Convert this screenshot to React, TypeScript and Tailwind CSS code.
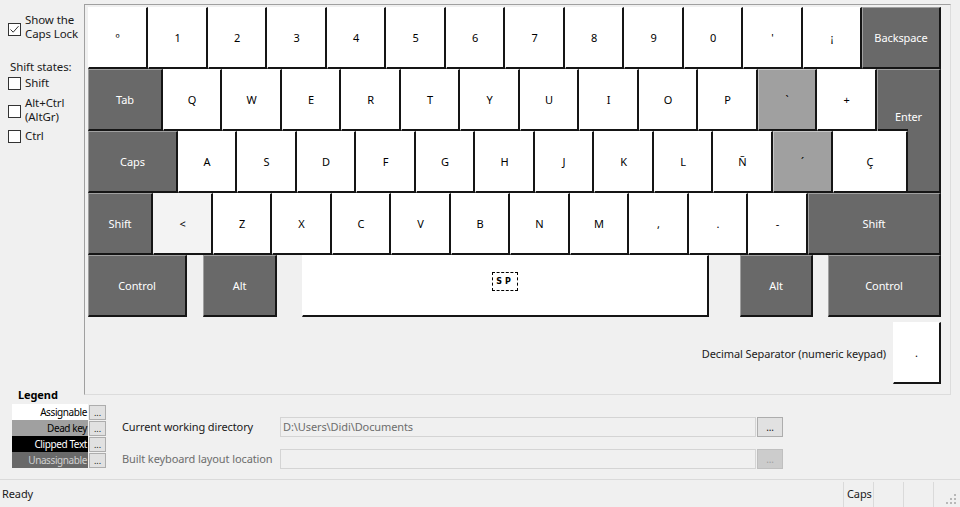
import React from 'react';

type Kind = 'w' | 'd' | 'g' | 'l';

interface KeyDef {
  t: string;
  w: string;
  k?: Kind;
  gap?: string;
}

const kindCls: Record<Kind, string> = {
  w: 'bg-white border-t-white border-l-white text-black',
  d: 'bg-[#696969] border-t-[#a0a0a0] border-l-[#a0a0a0] text-white',
  g: 'bg-[#a0a0a0] border-t-[#c6c6c6] border-l-[#c6c6c6] text-black',
  l: 'bg-[#f3f3f3] border-t-[#f3f3f3] border-l-[#f3f3f3] text-black',
};

const base =
  'h-[62px] shrink-0 flex items-center justify-center pt-[2px] border-t border-l border-r-2 border-b-2 border-r-[#151515] border-b-[#151515]';

const row1: KeyDef[] = [
  { t: 'º', w: 'w-[60px]' },
  { t: '1', w: 'w-[60px]' },
  { t: '2', w: 'w-[59px]' },
  { t: '3', w: 'w-[60px]' },
  { t: '4', w: 'w-[59px]' },
  { t: '5', w: 'w-[60px]' },
  { t: '6', w: 'w-[59px]' },
  { t: '7', w: 'w-[60px]' },
  { t: '8', w: 'w-[59px]' },
  { t: '9', w: 'w-[60px]' },
  { t: '0', w: 'w-[59px]' },
  { t: "'", w: 'w-[60px]' },
  { t: '¡', w: 'w-[59px]' },
  { t: 'Backspace', w: 'w-[79px]', k: 'd' },
];

const row2: KeyDef[] = [
  { t: 'Tab', w: 'w-[75px]', k: 'd' },
  { t: 'Q', w: 'w-[59px]' },
  { t: 'W', w: 'w-[60px]' },
  { t: 'E', w: 'w-[59px]' },
  { t: 'R', w: 'w-[60px]' },
  { t: 'T', w: 'w-[59px]' },
  { t: 'Y', w: 'w-[60px]' },
  { t: 'U', w: 'w-[59px]' },
  { t: 'I', w: 'w-[60px]' },
  { t: 'O', w: 'w-[59px]' },
  { t: 'P', w: 'w-[60px]' },
  { t: '`', w: 'w-[59px]', k: 'g' },
  { t: '+', w: 'w-[60px]' },
];

const row3: KeyDef[] = [
  { t: 'Caps', w: 'w-[90px]', k: 'd' },
  { t: 'A', w: 'w-[59px]' },
  { t: 'S', w: 'w-[60px]' },
  { t: 'D', w: 'w-[59px]' },
  { t: 'F', w: 'w-[60px]' },
  { t: 'G', w: 'w-[59px]' },
  { t: 'H', w: 'w-[60px]' },
  { t: 'J', w: 'w-[59px]' },
  { t: 'K', w: 'w-[60px]' },
  { t: 'L', w: 'w-[59px]' },
  { t: 'Ñ', w: 'w-[60px]' },
  { t: '´', w: 'w-[60px]', k: 'g' },
];

const row4: KeyDef[] = [
  { t: 'Shift', w: 'w-[65px]', k: 'd' },
  { t: '<', w: 'w-[60px]', k: 'l' },
  { t: 'Z', w: 'w-[59px]' },
  { t: 'X', w: 'w-[60px]' },
  { t: 'C', w: 'w-[59px]' },
  { t: 'V', w: 'w-[60px]' },
  { t: 'B', w: 'w-[59px]' },
  { t: 'N', w: 'w-[60px]' },
  { t: 'M', w: 'w-[59px]' },
  { t: ',', w: 'w-[60px]' },
  { t: '.', w: 'w-[59px]' },
  { t: '-', w: 'w-[60px]' },
  { t: 'Shift', w: 'w-[133px]', k: 'd' },
];

function Key({ t, w, k = 'w', gap = '' }: KeyDef) {
  return <div className={`${base} ${w} ${kindCls[k]} ${gap}`}>{t}</div>;
}

function Check({ on }: { on?: boolean }) {
  return (
    <span className="flex h-[13px] w-[13px] shrink-0 items-center justify-center border border-[#333] bg-white">
      {on && (
        <svg width="11" height="11" viewBox="0 0 11 11">
          <path d="M1.5 5.5 L4.2 8.2 L9.5 2.2" stroke="#333" strokeWidth="1" fill="none" />
        </svg>
      )}
    </span>
  );
}

const legend = [
  { t: 'Assignable', c: 'bg-white text-black' },
  { t: 'Dead key', c: 'bg-[#a0a0a0] text-black' },
  { t: 'Clipped Text', c: 'bg-black text-white' },
  { t: 'Unassignable', c: 'bg-[#696969] text-[#d0d0d0]' },
];

export default function App() {
  return (
    <div className="flex h-[507px] w-[960px] flex-col overflow-hidden bg-[#f0f0f0] font-['Noto_Sans',sans-serif] text-[11px] tracking-[-0.1px] text-[#1a1a1a]">
      <div className="flex h-[395px]">
        {/* options */}
        <div className="w-[84px] shrink-0 pl-[8px] pt-[13px] text-[11.5px] leading-[14px]">
          <div className="flex items-start gap-[4px]">
            <span className="mt-[10px]">
              <Check on />
            </span>
            <div>
              Show the
              <br />
              Caps Lock
            </div>
          </div>
          <div className="mt-[19px] pl-[2px]">Shift states:</div>
          <div className="mt-[2px] flex items-center gap-[4px]">
            <Check />
            <span>Shift</span>
          </div>
          <div className="mt-[6px] flex items-start gap-[4px]">
            <span className="mt-[9px]">
              <Check />
            </span>
            <div>
              Alt+Ctrl
              <br />
              (AltGr)
            </div>
          </div>
          <div className="mt-[5px] flex items-center gap-[4px]">
            <Check />
            <span>Ctrl</span>
          </div>
        </div>

        {/* keyboard */}
        <div className="mt-[4px] h-[391px] w-[867px] border border-t-[#a0a0a0] border-l-[#a0a0a0] border-r-[#dcdcdc] border-b-[#dcdcdc] pl-[3px] pt-[2px]">
          <div className="flex">
            {row1.map((k, i) => (
              <Key key={i} {...k} />
            ))}
          </div>
          <div className="flex">
            {row2.map((k, i) => (
              <Key key={i} {...k} />
            ))}
            <div className="flex h-[62px] w-[64px] shrink-0 flex-col border-t border-l border-r-2 border-t-[#a0a0a0] border-l-[#a0a0a0] border-r-[#151515] bg-[#696969] text-white">
              <div className="flex flex-1 items-end justify-center pb-[4px]">Enter</div>
              <div className="h-[2px] w-[30px] bg-[#151515]" />
            </div>
          </div>
          <div className="flex">
            {row3.map((k, i) => (
              <Key key={i} {...k} />
            ))}
            <Key t="Ç" w="w-[75px]" />
            <div className="h-[62px] w-[33px] shrink-0 border-r-2 border-b-2 border-r-[#151515] border-b-[#151515] bg-[#696969]" />
          </div>
          <div className="flex">
            {row4.map((k, i) => (
              <Key key={i} {...k} />
            ))}
          </div>
          <div className="flex">
            <Key t="Control" w="w-[99px]" k="d" />
            <Key t="Alt" w="w-[74px]" k="d" gap="ml-[16px]" />
            <div className={`${base} ml-[25px] w-[407px] items-start !pt-[16px] ${kindCls.w} border-l-[#ececec]`}>
              <span className="border border-dashed border-black px-[3px] py-[2px] font-['DejaVu_Sans',sans-serif] text-[8px] font-bold leading-[13px] tracking-[3px]">
                SP
              </span>
            </div>
            <Key t="Alt" w="w-[73px]" k="d" gap="ml-[31px]" />
            <Key t="Control" w="w-[113px]" k="d" gap="ml-[15px]" />
          </div>
          <div className="mt-[5px] flex w-[853px] items-center justify-end gap-[7px]">
            <span className="pt-[2px]">Decimal Separator (numeric keypad)</span>
            <Key t="." w="w-[48px]" />
          </div>
        </div>
      </div>

      {/* legend + paths */}
      <div className="flex h-[84px]">
        <div className="w-[106px] shrink-0 pl-[12px]">
          <div className="-mt-[7px] pl-[6px] font-bold leading-[14px] text-black">Legend</div>
          <div className="mt-[2px] flex flex-col">
            {legend.map((l) => (
              <div key={l.t} className="flex h-[16px] items-center">
                <div
                  className={`flex h-[16px] w-[76px] items-center justify-end whitespace-nowrap pr-[1px] text-[10px] tracking-[-0.4px] ${l.c}`}
                >
                  {l.t}
                </div>
                <div className="ml-[1px] flex h-[15px] w-[17px] items-center justify-center border border-[#adadad] bg-[#e1e1e1] text-[9px] leading-none">
                  ...
                </div>
              </div>
            ))}
          </div>
        </div>
        <div className="ml-[16px] pt-[22px]">
          <div className="flex h-[20px] items-center">
            <span className="w-[158px] whitespace-nowrap">Current working directory</span>
            <div className="flex h-[20px] w-[476px] items-center border border-[#d4d4d4] pl-[2px] text-[#6d6d6d]">
              D:\Users\Didi\Documents
            </div>
            <div className="ml-[1px] flex h-[20px] w-[26px] items-center justify-center border border-[#adadad] bg-[#e1e1e1] text-[10px]">
              ...
            </div>
          </div>
          <div className="mt-[12px] flex h-[20px] items-center">
            <span className="w-[158px] whitespace-nowrap text-[#6d6d6d]">Built keyboard layout location</span>
            <div className="h-[20px] w-[476px] border border-[#d4d4d4]" />
            <div className="ml-[1px] flex h-[20px] w-[26px] items-center justify-center border border-[#bfbfbf] bg-[#cccccc] text-[10px] text-[#a0a0a0]">
              ...
            </div>
          </div>
        </div>
      </div>

      {/* status bar */}
      <div className="flex h-[28px] border-t border-[#dadada] pt-[2px]">
        <div className="flex flex-1 items-center pl-[2px]">Ready</div>
        <div className="flex w-[30px] items-center whitespace-nowrap border-l border-[#dadada] pl-[3px]">Caps</div>
        <div className="w-[30px] border-l border-[#dadada]" />
        <div className="w-[30px] border-l border-[#dadada]" />
        <div className="flex w-[27px] items-end justify-end border-l border-[#dadada] pb-[2px] pr-[3px]">
          <svg width="11" height="11" viewBox="0 0 11 11">
            <rect x="8" y="0" width="2" height="2" fill="#b8b8b8" />
            <rect x="4" y="4" width="2" height="2" fill="#b8b8b8" />
            <rect x="8" y="4" width="2" height="2" fill="#b8b8b8" />
            <rect x="0" y="8" width="2" height="2" fill="#b8b8b8" />
            <rect x="4" y="8" width="2" height="2" fill="#b8b8b8" />
            <rect x="8" y="8" width="2" height="2" fill="#b8b8b8" />
          </svg>
        </div>
      </div>
    </div>
  );
}
